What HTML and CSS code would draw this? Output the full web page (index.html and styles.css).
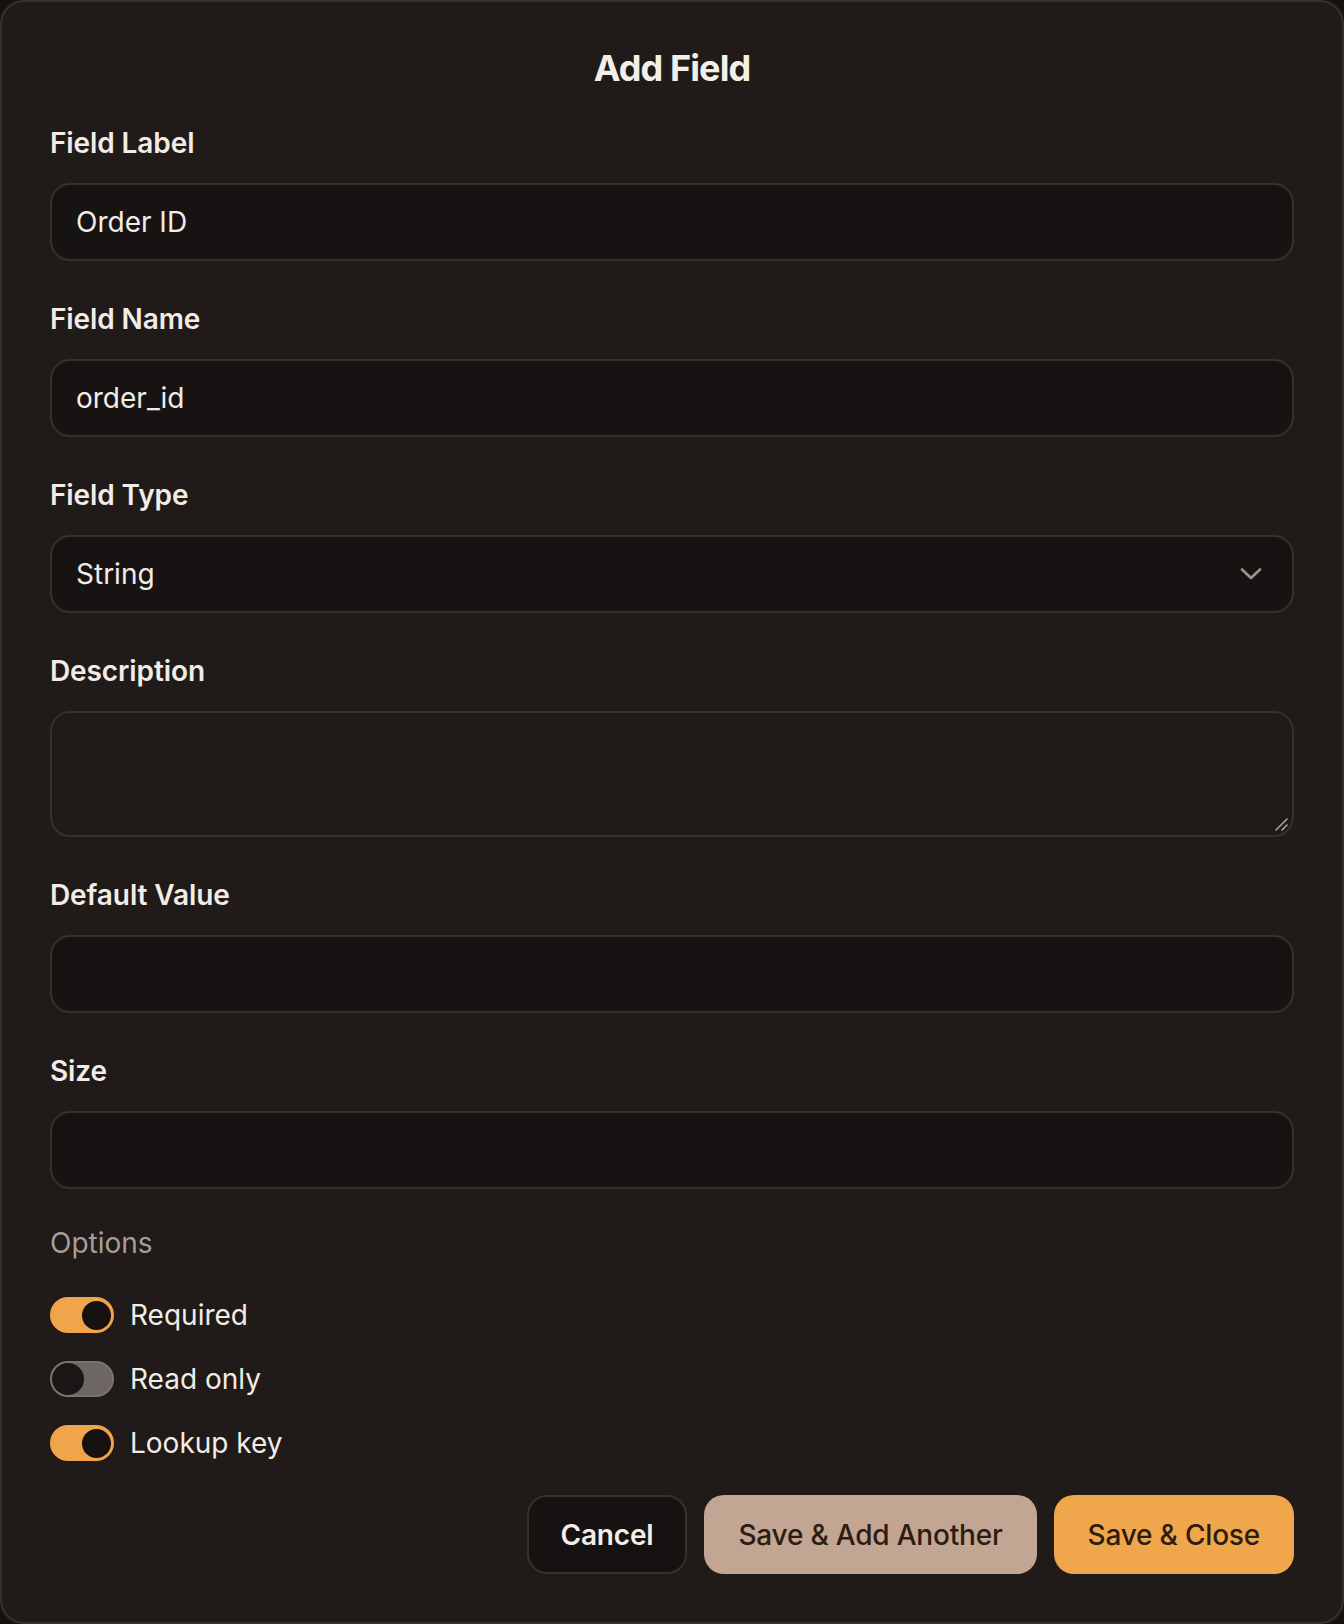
FILE: index.html
```html
<!DOCTYPE html>
<html lang="en">
<head>
<meta charset="utf-8">
<title>Add Field</title>
<link rel="stylesheet" href="styles.css">
</head>
<body>
<div class="dialog">
  <h1 class="title">Add Field</h1>
  <div class="field">
    <label class="label">Field Label</label>
    <div class="input">Order ID</div>
  </div>
  <div class="field">
    <label class="label">Field Name</label>
    <div class="input">order_id</div>
  </div>
  <div class="field">
    <label class="label">Field Type</label>
    <div class="input select">
      <span>String</span>
      <svg class="chevron" width="22" height="12" viewBox="0 0 22 12"><path d="M2 1.5 L11 10 L20 1.5" fill="none" stroke="#9b958f" stroke-width="2.6" stroke-linecap="round" stroke-linejoin="round"/></svg>
    </div>
  </div>
  <div class="field">
    <label class="label">Description</label>
    <div class="input textarea">
      <svg class="grip" width="14" height="14" viewBox="0 0 14 14"><path d="M2 13 L13 2 M8 13 L13 8" stroke="#a8a29c" stroke-width="1.6" stroke-linecap="round"/></svg>
    </div>
  </div>
  <div class="field">
    <label class="label">Default Value</label>
    <div class="input"></div>
  </div>
  <div class="field">
    <label class="label">Size</label>
    <div class="input"></div>
  </div>
  <div class="options">
    <div class="options-title">Options</div>
    <div class="toggle-row"><span class="toggle on"><span class="knob"></span></span><span class="toggle-label">Required</span></div>
    <div class="toggle-row"><span class="toggle off"><span class="knob"></span></span><span class="toggle-label">Read only</span></div>
    <div class="toggle-row"><span class="toggle on"><span class="knob"></span></span><span class="toggle-label">Lookup key</span></div>
  </div>
  <div class="actions">
    <button class="btn cancel">Cancel</button>
    <button class="btn secondary">Save &amp; Add Another</button>
    <button class="btn primary">Save &amp; Close</button>
  </div>
</div>
</body>
</html>
```

FILE: styles.css
```css
html, body {
  margin: 0;
  padding: 0;
  background: #141110;
}
body {
  font-family: Inter, "Noto Sans", "Liberation Sans", sans-serif;
  color: #f1ece6;
  width: 1344px;
  height: 1624px;
  overflow: hidden;
}
.dialog {
  box-sizing: border-box;
  width: 1344px;
  height: 1624px;
  background: #201a18;
  border: 2px solid #36312c;
  border-radius: 24px;
  padding: 48px 48px 48px;
  display: flex;
  flex-direction: column;
}
.title {
  margin: 0 0 37px;
  text-align: center;
  font-size: 36px;
  line-height: 36px;
  font-weight: 700;
  letter-spacing: -0.9px;
  color: #f3eee8;
}
.field {
  display: flex;
  flex-direction: column;
  margin-bottom: 38px;
}
.label {
  font-size: 28px;
  line-height: 40px;
  font-weight: 600;
  letter-spacing: -0.1px;
  margin-bottom: 20px;
  color: #f1ece6;
}
.input {
  box-sizing: border-box;
  height: 78px;
  background: #171312;
  border: 2px solid #36312c;
  border-radius: 20px;
  padding: 0 24px;
  display: flex;
  align-items: center;
  font-size: 28px;
  color: #f1ece6;
}
.select {
  justify-content: space-between;
  padding-right: 30px;
}
.textarea {
  height: 126px;
  background: #201a18;
  position: relative;
}
.grip {
  position: absolute;
  right: 4px;
  bottom: 4px;
}
.options {
  display: flex;
  flex-direction: column;
  gap: 24px;
  margin-top: -4px;
}
.options-title {
  font-size: 28px;
  line-height: 40px;
  color: #a59e98;
  margin-bottom: 8px;
}
.toggle-row {
  display: flex;
  align-items: center;
  gap: 16px;
  height: 40px;
}
.toggle {
  box-sizing: border-box;
  width: 64px;
  height: 36px;
  border-radius: 18px;
  display: flex;
  align-items: center;
  padding: 0 1px;
}
.toggle.on {
  background: #f0a54b;
  justify-content: flex-end;
}
.toggle.off {
  background: #6d6663;
  border: 2px solid #7a736f;
  padding: 0;
  justify-content: flex-start;
}
.knob {
  box-sizing: border-box;
  width: 33px;
  height: 33px;
  border-radius: 50%;
  background: #161211;
  border: 2px solid #f0a54b;
}
.toggle.off .knob {
  width: 32px;
  height: 32px;
  border: none;
  background: #1a1615;
}
.toggle-label {
  font-size: 28px;
  line-height: 40px;
  color: #f1ece6;
}
.actions {
  margin-top: auto;
  display: flex;
  justify-content: flex-end;
  gap: 17px;
}
.btn {
  box-sizing: border-box;
  height: 79px;
  border-radius: 20px;
  font-family: Inter, "Noto Sans", "Liberation Sans", sans-serif;
  font-size: 28px;
  font-weight: 500;
  letter-spacing: -0.2px;
  padding: 0 32px;
  border: 2px solid transparent;
  cursor: pointer;
}
.cancel {
  background: #161211;
  border-color: #36312c;
  color: #f3eee8;
  font-weight: 600;
}
.secondary {
  background: #c2a592;
  color: #2c1c11;
}
.primary {
  background: #f0a64b;
  color: #2c1c11;
}
```
